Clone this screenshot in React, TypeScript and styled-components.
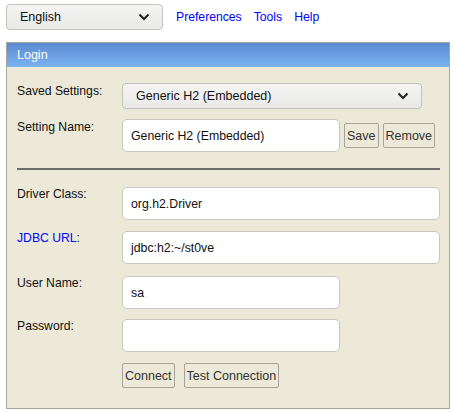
import React from "react";
import styled, { createGlobalStyle } from "styled-components";

const Global = createGlobalStyle`
  html, body { margin: 0; padding: 0; background: #fff; }
  body { font-family: "Liberation Sans", Arial, sans-serif; font-size: 12px; color: #000; }
`;

const Page = styled.div`
  width: 454px;
  height: 412px;
  box-sizing: border-box;
  padding: 4px 4px 0 6px;
`;

const TopBar = styled.div`
  display: flex;
  align-items: center;
  gap: 13px;
  height: 26px;
`;

const DropDown = styled.div<{ $w: number }>`
  width: ${(p) => p.$w}px;
  height: 26px;
  box-sizing: border-box;
  border: 1px solid #c4c2be;
  border-radius: 4px;
  background: linear-gradient(#f4f4f3, #e9e9e7);
  display: flex;
  align-items: center;
  justify-content: space-between;
  padding: 0 12px 0 13px;
  font-size: 12.5px;
  color: #111;
`;

const Links = styled.div`
  display: flex;
  gap: 12px;
`;

const Link = styled.a`
  color: #0000ff;
  text-decoration: none;
  font-size: 12.2px;
`;

const Panel = styled.div`
  margin-top: 12px;
  width: 444px;
  height: 367px;
  box-sizing: border-box;
  border: 1px solid #a8a59c;
  background: #ece9d8;
`;

const Header = styled.div`
  height: 24px;
  background: linear-gradient(#5c8ad2, #7ab3f2);
  color: #fff;
  font-size: 12.5px;
  display: flex;
  align-items: center;
  padding-left: 10px;
`;

const Body = styled.div`
  padding: 16px 10px 0 10px;
  display: flex;
  flex-direction: column;
`;

const Row = styled.div<{ $mt: number }>`
  display: grid;
  grid-template-columns: 105px 1fr;
  margin-top: ${(p) => p.$mt}px;
  align-items: start;
`;

const Label = styled.div<{ $pt: number }>`
  padding-top: ${(p) => p.$pt}px;
  font-size: 12.2px;
  color: #111;
`;

const Blue = styled.span`
  color: #0000ff;
`;

const Field = styled.div<{ $w: number }>`
  width: ${(p) => p.$w}px;
  height: 33px;
  box-sizing: border-box;
  border: 1px solid #c8c6be;
  border-radius: 5px;
  background: #fff;
  display: flex;
  align-items: center;
  padding-left: 8px;
  font-size: 12.3px;
  color: #111;
`;

const Cell = styled.div`
  display: flex;
  align-items: center;
  gap: 4px;
`;

const Btn = styled.div`
  height: 25px;
  box-sizing: border-box;
  border: 1px solid #a6a398;
  border-radius: 2px;
  background: #ece9d8;
  display: flex;
  align-items: center;
  padding: 0 2px;
  font-size: 12.5px;
  color: #333;
`;

const ButtonsRow = styled.div`
  display: flex;
  gap: 9px;
  margin-left: 105px;
  margin-top: 11px;
`;

const Rule = styled.div`
  height: 2px;
  background: #6e6d68;
  margin: 16px 0 0 0;
  width: 423px;
`;

const Chevron = () => (
  <svg width="12" height="8" viewBox="0 0 12 8">
    <path d="M1.5 1.5 L6 6 L10.5 1.5" fill="none" stroke="#222" strokeWidth="2" />
  </svg>
);

export default function App() {
  return (
    <>
      <Global />
      <Page>
        <TopBar>
          <DropDown $w={157}>
            <span>English</span>
            <Chevron />
          </DropDown>
          <Links>
            <Link href="#">Preferences</Link>
            <Link href="#">Tools</Link>
            <Link href="#">Help</Link>
          </Links>
        </TopBar>
        <Panel>
          <Header>Login</Header>
          <Body>
            <Row $mt={0}>
              <Label $pt={1}>Saved Settings:</Label>
              <DropDown $w={300}>
                <span>Generic H2 (Embedded)</span>
                <Chevron />
              </DropDown>
            </Row>
            <Row $mt={10}>
              <Label $pt={1}>Setting Name:</Label>
              <Cell>
                <Field $w={218}>Generic H2 (Embedded)</Field>
                <Btn>Save</Btn>
                <Btn>Remove</Btn>
              </Cell>
            </Row>
            <Rule />
            <Row $mt={17}>
              <Label $pt={0}>Driver Class:</Label>
              <Field $w={318}>org.h2.Driver</Field>
            </Row>
            <Row $mt={11}>
              <Label $pt={0}>
                <Blue>JDBC URL</Blue>:
              </Label>
              <Field $w={318}>jdbc:h2:~/st0ve</Field>
            </Row>
            <Row $mt={12}>
              <Label $pt={0}>User Name:</Label>
              <Field $w={218}>sa</Field>
            </Row>
            <Row $mt={10}>
              <Label $pt={0}>Password:</Label>
              <Field $w={218}></Field>
            </Row>
            <ButtonsRow>
              <Btn>Connect</Btn>
              <Btn>Test Connection</Btn>
            </ButtonsRow>
          </Body>
        </Panel>
      </Page>
    </>
  );
}
